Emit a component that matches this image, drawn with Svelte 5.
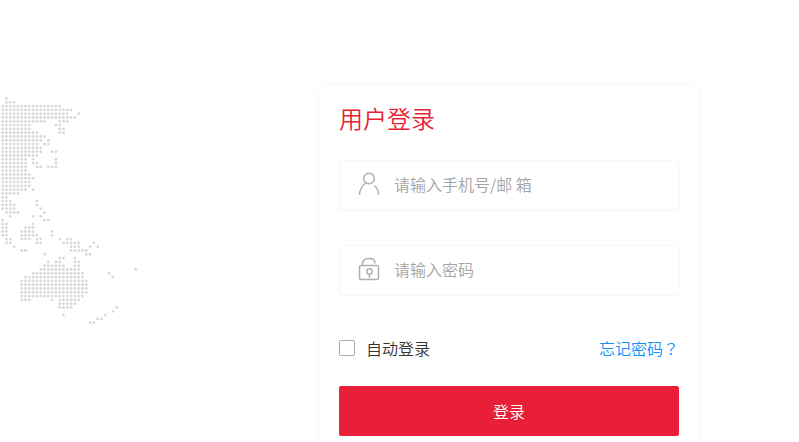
<script lang="ts">
  let account = $state('');
  let password = $state('');
  let remember = $state(false);

  // filled columns of every map row, as "from-to" ranges
  const mapRows = [
    '1', '1-3', '0-15', '0-18', '0-17 20', '0-19', '0-11 15-17', '0-7 14-15',
    '0-7 15-16', '0-9 15-16', '0-11', '0-10 12', '0-9 11-12', '0-10', '0-10 13-14',
    '0-9', '0-6 8 14', '0-6 8-9 14', '0-6 9-10 12-14', '0-6', '0-7', '0-8', '0-7',
    '0-7', '0-6 8', '0-4', '0-1', '0-2 9', '0-3 9', '0-3 10', '1-4 11', '2 8 10',
    '0 11-12', '0-1 8', '0-1 6-8', '0-1 5-8 13', '0-1 5-9 13',
    '1-2 5-7 9-10 15 17-18', '1-2 9-10 16-20 24', '3 18-20 23 25', '5-6 18-22',
    '11 22-23', '15-16 19', '12 14-15 19-20', '11-16 19-20', '10-20 35', '8-21 28',
    '6-21 29', '5-22', '5-22', '5-22', '5-22', '5-21', '5-7 13 15-20', '15-19',
    '15-18 30', '29', '16 27', '25-26', '23-24'
  ];
  const pitch = 3.8;

  const dots = mapRows.flatMap((row, r) =>
    row.split(' ').flatMap((range) => {
      const [from, to = from] = range.split('-').map(Number);
      return Array.from({ length: to - from + 1 }, (_, i) => ({
        x: 2.7 + (from + i) * pitch,
        y: 2.5 + r * pitch
      }));
    })
  );
</script>

<main class="page">
  <svg class="map" viewBox="0 0 140 230" aria-hidden="true">
    {#each dots as dot}
      <circle cx={dot.x} cy={dot.y} r="1.4" />
    {/each}
  </svg>

  <form class="card" onsubmit={(e) => e.preventDefault()}>
    <h1>用户登录</h1>

    <label class="field">
      <svg class="icon" viewBox="0 0 24 24" aria-hidden="true">
        <circle cx="12" cy="6.5" r="5.3" />
        <path d="M2.500 23c0-5 2-8.500 6-12M17 13.500c3 2 4.500 5.500 4.500 9.500" />
      </svg>
      <input type="text" placeholder="请输入手机号/邮 箱" aria-label="手机号/邮箱" bind:value={account} />
    </label>

    <label class="field">
      <svg class="icon" viewBox="0 0 24 24" aria-hidden="true">
        <rect x="2.5" y="8.5" width="19" height="14" rx="1.5" />
        <path d="M5.500 8.500V7A5.500 5.500 0 0 1 11 1.500h2c3 0 5 2 5 5" />
        <circle cx="12.5" cy="14.5" r="2.7" />
        <path d="M12.500 17v4" />
      </svg>
      <input type="password" placeholder="请输入密码" aria-label="密码" bind:value={password} />
    </label>

    <div class="options">
      <label class="remember">
        <input type="checkbox" bind:checked={remember} />
        自动登录
      </label>
      <a href="#forgot">忘记密码<span class="mark">？</span></a>
    </div>

    <button type="submit">登录</button>
  </form>
</main>

<style>
  :global(body) {
    background: #fff;
  }

  .page {
    display: flex;
    justify-content: space-between;
    align-items: flex-start;
    box-sizing: border-box;
    height: 100vh;
    padding: 86px 100px 0 0;
    overflow: hidden;
    font-family: "Noto Sans CJK SC", sans-serif;
    font-size: 16px;
    font-weight: 350;
    line-height: 24px;
    color: #333;
  }

  .map {
    width: 140px;
    height: 230px;
    margin-top: 10px;
    fill: #d8d8d8;
  }

  .card {
    box-sizing: border-box;
    width: 380px;
    padding: 14px 20px 20px;
    border-radius: 4px;
    background: #fff;
    box-shadow: 0 0 6px rgba(0, 0, 0, 0.04);
  }

  h1 {
    margin: 0 0 24px;
    font-size: 24px;
    font-weight: 350;
    line-height: 36px;
    color: #e81f36;
  }

  .field {
    display: flex;
    align-items: center;
    gap: 13px;
    box-sizing: border-box;
    height: 50px;
    margin-bottom: 35px;
    padding: 0 17px 2px;
    border: 1px solid #f8f8f8;
    border-radius: 2px;
    box-shadow: 0 1px 2px rgba(0, 0, 0, 0.03);
  }

  .icon {
    flex: none;
    width: 24px;
    height: 24px;
    fill: none;
    stroke: #b0b0b0;
    stroke-width: 1.5;
  }

  .field input {
    flex: 1;
    min-width: 0;
    padding: 0;
    border: 0;
    outline: 0;
    background: none;
    font: inherit;
    color: #333;
  }

  .field input::placeholder {
    color: #a4a4a4;
    opacity: 1;
  }

  .options {
    display: flex;
    justify-content: space-between;
    align-items: center;
    margin: 41px 0 26px;
  }

  .remember {
    display: flex;
    align-items: center;
    gap: 11px;
  }

  .remember input {
    appearance: none;
    width: 16px;
    height: 16px;
    margin: 0;
    border: 1px solid #aaa;
    border-radius: 2px;
    background: #fff;
  }

  .remember input:checked {
    background: #e81f36;
    border-color: #e81f36;
  }

  a {
    color: #0e90f8;
    text-decoration: none;
  }

  /* centred full-width question mark */
  .mark {
    font-family: "Noto Sans CJK JP", sans-serif;
  }

  button {
    width: 100%;
    height: 50px;
    padding: 0;
    border: 0;
    border-radius: 2px;
    background: #e81f36;
    font: inherit;
    color: #fff;
    cursor: pointer;
  }
</style>
